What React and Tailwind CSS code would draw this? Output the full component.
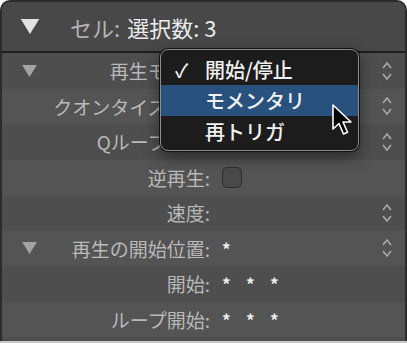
import React from 'react';

const font = { fontFamily: '"Noto Sans CJK JP", "Noto Sans", sans-serif' };

function Tri({ className }) {
  return (
    <svg viewBox="0 0 16 13" className={className}>
      <polygon points="0,0 16,0 8,13" fill="currentColor" />
    </svg>
  );
}

function Stepper() {
  return (
    <svg viewBox="0 0 12 22" className="w-[12px] h-[22px] text-[#a9a9a9]">
      <polyline points="2,8 6,3 10,8" fill="none" stroke="currentColor" strokeWidth="1.6" />
      <polyline points="2,14 6,19 10,14" fill="none" stroke="currentColor" strokeWidth="1.6" />
    </svg>
  );
}

function Row({ label, tri, stepper, dark, children }) {
  return (
    <div className={`flex items-center h-[35.5px] ${dark ? 'bg-[#4e4e4e]' : 'bg-[#545454]'}`}>
      <div className="w-[208px] flex items-center pl-[20px]">
        {tri && <Tri className="w-[15px] h-[12px] text-[#a3a3a3]" />}
        <span className="ml-auto text-[19px] leading-none text-[#b9b9b9] whitespace-nowrap">{label}</span>
      </div>
      <div className="ml-[12px] flex items-center">{children}</div>
      {stepper && <div className="ml-auto mr-[12px] flex items-center"><Stepper /></div>}
    </div>
  );
}

function Stars({ n }) {
  return (
    <div className="flex items-center">
      {Array.from({ length: n }).map((_, i) => (
        <span key={i} className="w-[24px] text-[17px] font-bold leading-none text-[#ececec]">*</span>
      ))}
    </div>
  );
}

export default function App() {
  return (
    <div className="relative w-[407px] h-[343px] bg-white overflow-hidden" style={font}>
      <div className="h-[341px] rounded-t-[10px] border-2 border-b-0 border-[#2b2b2b] bg-[#4e4e4e] overflow-hidden flex flex-col">
        {/* header */}
        <div className="h-[51px] flex items-center bg-[#484848] border-b-2 border-[#1d1d1d] shrink-0">
          <Tri className="ml-[18px] w-[20px] h-[15px] text-[#e2e2e2]" />
          <div className="ml-[30px] text-[22px] leading-none whitespace-nowrap">
            <span className="text-[#b3b3b3]">セル:</span>
            <span className="ml-[7px] text-[#ececec]">選択数: 3</span>
          </div>
        </div>

        <Row label="再生モード:" tri stepper dark />
        <Row label="クオンタイズ開始:" stepper />
        <Row label="Qループ開始:" stepper dark />
        <Row label="逆再生:">
          <div className="w-[20px] h-[21px] rounded-[5px] border border-[#2d2d2d] bg-[#494949]" />
        </Row>
        <Row label="速度:" stepper dark />
        <Row label="再生の開始位置:" tri stepper>
          <Stars n={1} />
        </Row>
        <Row label="開始:" dark>
          <Stars n={3} />
        </Row>
        <Row label="ループ開始:">
          <Stars n={3} />
        </Row>
      </div>
      <div className="h-[2px] bg-[#c9c9c9]" />

      {/* popup menu */}
      <div className="absolute left-[160px] top-[49px] w-[199px] h-[102px] rounded-[8px] border border-[#8c8c8c] bg-[#1c1c1c] py-[4px] shadow-[0_0_0_1px_#111,0_6px_16px_rgba(0,0,0,0.5)]">
        <div className="h-[31px] flex items-center text-[20px] font-medium leading-none text-[#f0f0f0]">
          <span className="w-[44px] pl-[14px] text-[19px]">✓</span>
          <span>開始/停止</span>
        </div>
        <div className="h-[31px] flex items-center text-[20px] font-medium leading-none text-[#f0f0f0] bg-[#29517d]">
          <span className="w-[44px]" />
          <span>モメンタリ</span>
        </div>
        <div className="h-[31px] flex items-center text-[20px] font-medium leading-none text-[#f0f0f0]">
          <span className="w-[44px]" />
          <span>再トリガ</span>
        </div>
      </div>

      {/* cursor */}
      <svg viewBox="0 0 22 32" className="absolute left-[331px] top-[104px] w-[22px] h-[32px]">
        <path d="M2 1 L2 25 L8 19.5 L12.5 30 L16.5 28.3 L12 18 L20 18 Z" fill="#000" stroke="#fff" strokeWidth="1.6" strokeLinejoin="round" />
      </svg>
    </div>
  );
}
